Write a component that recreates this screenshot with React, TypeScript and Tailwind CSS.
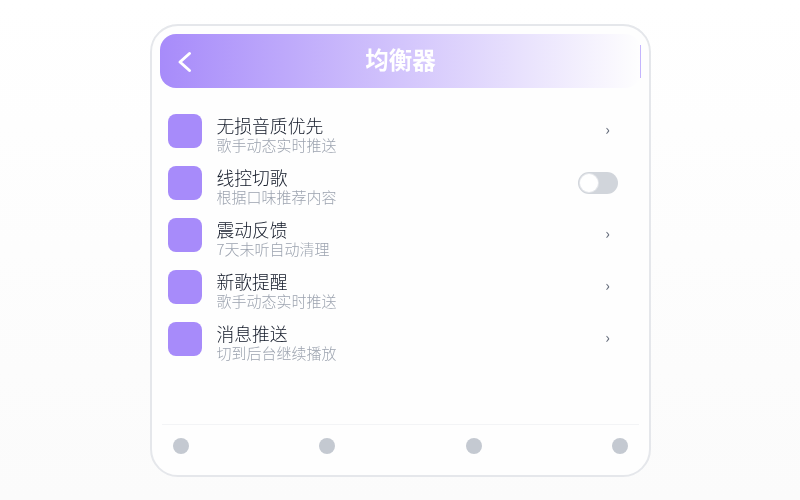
const rows = [
  { title: "无损音质优先", sub: "歌手动态实时推送", toggle: false },
  { title: "线控切歌", sub: "根据口味推荐内容", toggle: true },
  { title: "震动反馈", sub: "7天未听自动清理", toggle: false },
  { title: "新歌提醒", sub: "歌手动态实时推送", toggle: false },
  { title: "消息推送", sub: "切到后台继续播放", toggle: false },
];

function Row({ title, sub, toggle }: { title: string; sub: string; toggle: boolean }) {
  return (
    <div className="flex h-[52px] items-center pl-[8px] pr-[23px]">
      <div className="h-[34px] w-[34px] shrink-0 rounded-[8px] bg-[#a78bfa]" />
      <div className="ml-[14.5px] flex-1 pt-[5px]">
        <div className="text-[17.8px] font-light leading-[22px] text-[#111827]">{title}</div>
        <div className="mt-[1px] text-[15px] font-light leading-[16px] text-[#9ca3af]">{sub}</div>
      </div>
      {toggle ? (
        <div className="flex h-[22px] w-[40px] items-center rounded-full bg-[#d1d5db] pl-[2px]">
          <div className="h-[18px] w-[18px] rounded-full bg-white ring-1 ring-[#e5e7eb]" />
        </div>
      ) : (
        <span className="mb-[4px] mr-[8px] text-[15px] font-medium text-[#6b7280]">›</span>
      )}
    </div>
  );
}

export default function App() {
  return (
    <div
      className="flex h-[500px] w-[800px] items-center justify-center bg-gradient-to-b from-white to-[#fbfbfb] pl-[1px] pt-[1px]"
      style={{ fontFamily: '"Noto Sans CJK SC", "Noto Sans", sans-serif' }}
    >
      <div className="flex h-[453px] w-[501px] transform-gpu flex-col rounded-[28px] border-2 border-[#e5e7eb] bg-[#fefefe] px-[8px] pt-[8px]">
        <div className="flex h-[54px] items-center rounded-[16px] bg-gradient-to-r from-[#a78bfa] to-transparent">
          <div className="flex flex-1 items-center">
            <svg className="ml-[17px]" width="16" height="24" viewBox="0 0 16 24" fill="none">
              <path d="M12.5 4.5 L3 13 L12.5 21.5" stroke="white" strokeWidth="3" strokeLinecap="round" strokeLinejoin="round" />
            </svg>
          </div>
          <div className="mb-[2px] text-[23.5px] font-bold text-white">均衡器</div>
          <div className="flex flex-1 justify-end">
            <div className="h-[33px] w-[1px] bg-[#c4b5fd]" />
          </div>
        </div>
        <div className="mt-[17px] flex-1">
          {rows.map((r) => (
            <Row key={r.title} {...r} />
          ))}
        </div>
        <div className="mx-[2px] flex h-[51px] items-start justify-between border-t border-[#f3f4f6] px-[10.5px] pt-[13px]">
          <div className="h-[16px] w-[16px] rounded-full bg-[#c4c9d1]" />
          <div className="h-[16px] w-[16px] rounded-full bg-[#c4c9d1]" />
          <div className="h-[16px] w-[16px] rounded-full bg-[#c4c9d1]" />
          <div className="h-[16px] w-[16px] rounded-full bg-[#c4c9d1]" />
        </div>
      </div>
    </div>
  );
}
